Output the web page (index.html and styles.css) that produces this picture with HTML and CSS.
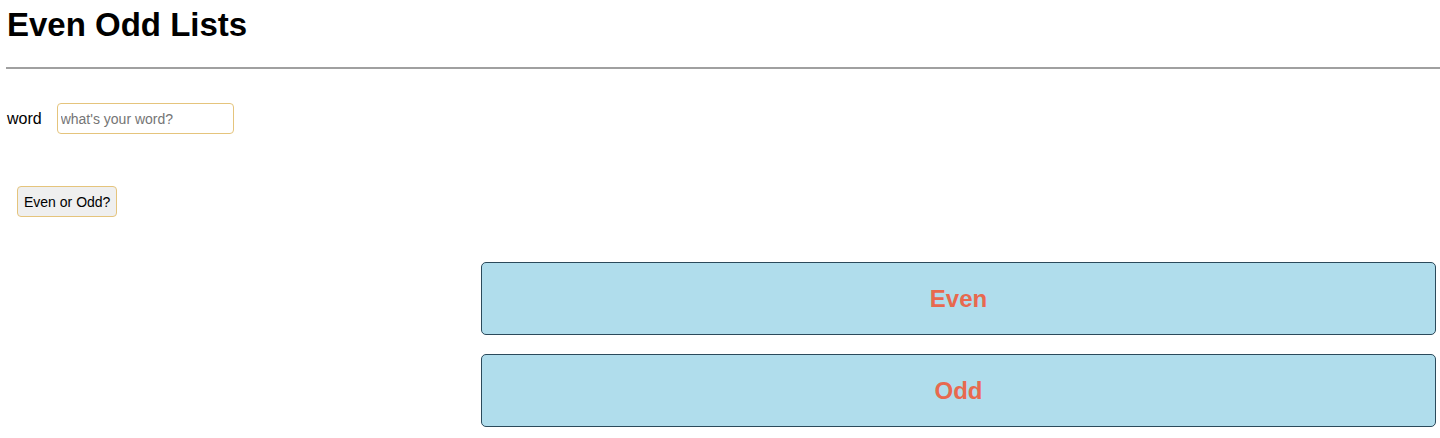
FILE: index.html
```html
<!DOCTYPE html>
<html>
<head>
<meta charset="utf-8">
<link rel="stylesheet" href="styles.css">
</head>
<body>
<header class="header">
  <h1 class="title">Even Odd Lists</h1>
</header>
<hr class="rule">
<form class="form">
  <div class="field">
    <label class="label" for="word">word</label>
    <input class="input" id="word" type="text" placeholder="what's your word?">
  </div>
  <div class="actions">
    <button class="btn" type="button">Even or Odd?</button>
  </div>
</form>
<section class="lists">
  <div class="list"><h2 class="list-title">Even</h2></div>
  <div class="list"><h2 class="list-title">Odd</h2></div>
</section>
</body>
</html>
```
FILE: styles.css
```css
html, body {
  margin: 0;
  padding: 0;
}
body {
  font-family: "Liberation Sans", Arial, sans-serif;
  color: #000;
  background: #fff;
  width: 1440px;
  overflow: hidden;
}
.header {
  padding: 6px 0 0 7px;
}
.title {
  margin: 0;
  font-size: 33px;
  font-weight: bold;
  line-height: 38px;
}
.rule {
  margin: 23px 0 0 6px;
  border: 0;
  border-top: 2px solid #a0a0a0;
  height: 0;
}
.form {
  padding: 0 0 0 7px;
}
.field {
  display: flex;
  align-items: center;
  gap: 15px;
  margin-top: 34px;
}
.label {
  font-size: 16px;
}
.input {
  box-sizing: border-box;
  width: 177px;
  height: 31px;
  border: 1px solid #e5c47c;
  border-radius: 4px;
  padding: 0 3px;
  font-family: "Liberation Sans", Arial, sans-serif;
  font-size: 14px;
  outline: none;
}
.input::placeholder {
  color: #757575;
}
.actions {
  margin-top: 52px;
  padding-left: 10px;
}
.btn {
  box-sizing: border-box;
  height: 31px;
  padding: 0 6px;
  background: #efefef;
  border: 1px solid #e5c47c;
  border-radius: 4px;
  font-family: "Liberation Sans", Arial, sans-serif;
  font-size: 14px;
  color: #000;
}
.lists {
  display: flex;
  flex-direction: column;
  gap: 19px;
  margin: 45px 4px 0 481px;
}
.list {
  box-sizing: border-box;
  height: 73px;
  background: #b0ddec;
  border: 1px solid #2b4a5b;
  border-radius: 5px;
  display: flex;
  align-items: center;
  justify-content: center;
}
.list-title {
  margin: 0;
  font-size: 24px;
  font-weight: bold;
  color: #e8694f;
}
```
